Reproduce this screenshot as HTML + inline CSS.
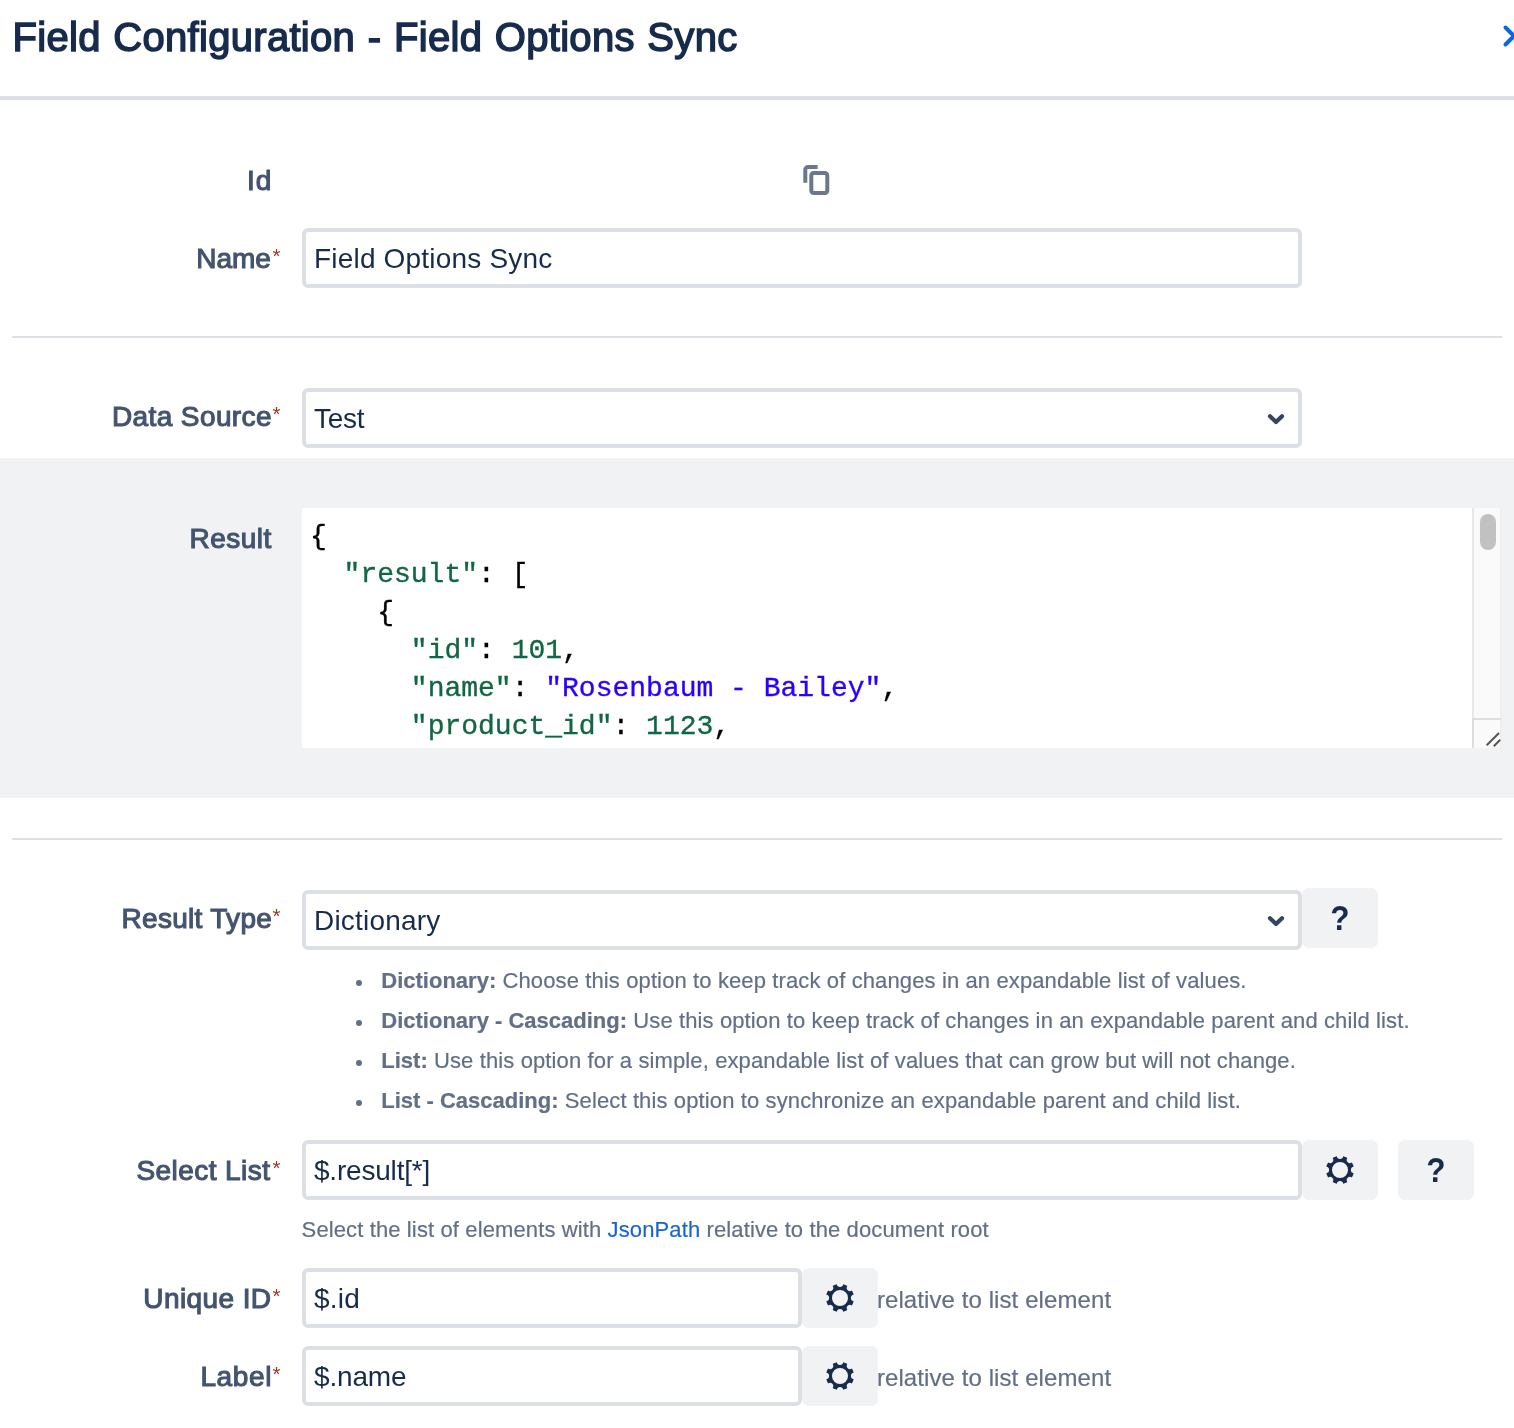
<!DOCTYPE html>
<html lang="en"><head><meta charset="utf-8"><title>Field Configuration - Field Options Sync</title>
<style>
*{box-sizing:border-box;margin:0;padding:0}
html,body{width:1514px;height:1428px;overflow:hidden;background:#fff}
body{position:relative;font-family:"Liberation Sans",sans-serif;color:#172B4D}
#root{position:absolute;left:0;top:0;width:1514px;height:1428px;will-change:transform}
.a{position:absolute}
.t{position:absolute;white-space:pre;line-height:1}
h1.t{font-size:40px;font-weight:400;color:#172B4D;letter-spacing:.3px;word-spacing:1.2px;-webkit-text-stroke:1.5px #172B4D}
.lb{font-size:28px;font-weight:400;color:#44546F;-webkit-text-stroke:1.1px #44546F}
.rq{font-size:20.5px;color:#AE2E24;left:272.4px;font-weight:400}
.in{position:absolute;height:60px;border:4px solid #DCDFE4;border-radius:6px;background:#fff}
.v{font-size:28px;color:#172B4D;left:314px}
.btn{position:absolute;width:76px;height:60px;border-radius:7px;background:#F1F2F4}
.q{font-size:35px;font-weight:700;color:#172B4D;width:76px;text-align:center;transform:scaleX(.9)}
.hr{position:absolute;left:12px;width:1490px;height:2px;background:#DCDFE4}
.d{font-size:22px;color:#626F86;letter-spacing:.12px;-webkit-text-stroke:.2px #626F86}
.d b{letter-spacing:0}
.d24{font-size:24px;color:#626F86;letter-spacing:.09px;-webkit-text-stroke:.2px #626F86}
.ic{position:absolute;overflow:visible}
.code{position:absolute;left:302px;top:508px;width:1200px;height:240px;background:#fff;overflow:hidden}
.code pre{position:absolute;left:8px;top:10px;font-family:"Liberation Mono","DejaVu Sans Mono",monospace;font-size:28px;line-height:38px;color:#000;-webkit-text-stroke:.35px}
.k{color:#116644}.s{color:#2A00FF}
.dot{position:absolute;left:356px;width:6px;height:6px;border-radius:50%;background:#626F86}
a{color:#0C66E4;text-decoration:none}
</style></head>
<body>
<div id="root">
<h1 class="t" style="left:12.5px;top:17px">Field Configuration - Field Options Sync</h1>
<svg class="ic" style="left:1496px;top:20px" width="18" height="32" viewBox="1496 20 18 32"><path d="M1505.5 27.5L1514 36L1505.5 44.5" fill="none" stroke="#0C66E4" stroke-width="4" stroke-linecap="round" stroke-linejoin="round"/></svg>
<div class="a" style="left:0;top:96px;width:1514px;height:4px;background:#DCDFE4"></div>
<label class="t lb" style="left:247px;top:167px;letter-spacing:1px">Id</label>
<svg class="ic" style="left:800px;top:162px" width="34" height="36" viewBox="800 162 34 36"><g fill="none" stroke="#6B778C" stroke-width="4"><rect x="811.3" y="173" width="16" height="20" rx="2.4"/><path d="M805.3 182.8V169.6a2.5 2.5 0 0 1 2.5-2.5H817.6"/></g></svg>
<label class="t lb" style="left:196.2px;top:245px;letter-spacing:.02px">Name</label><span class="t rq" style="top:246px">*</span>
<div class="in" style="left:302px;top:228px;width:1000px"></div><span class="t v" style="left:314px;top:245px;letter-spacing:.19px">Field Options Sync</span>
<div class="hr" style="top:336px"></div>
<label class="t lb" style="left:112px;top:403px;letter-spacing:.39px">Data Source</label><span class="t rq" style="top:404px">*</span>
<div class="in" style="left:302px;top:388px;width:1000px"></div><span class="t v" style="left:314px;top:405px;letter-spacing:-.27px">Test</span>
<svg class="ic" style="left:1264px;top:410px" width="24" height="20" viewBox="1264 410 24 20"><path d="M1270 416.2L1276 422L1282 416.2" fill="none" stroke="#344563" stroke-width="4.2" stroke-linecap="round" stroke-linejoin="round"/></svg>
<div class="a" style="left:0;top:458px;width:1514px;height:340px;background:#F1F2F4"></div>
<label class="t lb" style="left:189.6px;top:525px;letter-spacing:.46px">Result</label>
<div class="code"><pre>{
  <span class="k">"result"</span>: [
    {
      <span class="k">"id"</span>: <span class="k">101</span>,
      <span class="k">"name"</span>: <span class="s">"Rosenbaum - Bailey"</span>,
      <span class="k">"product_id"</span>: <span class="k">1123</span>,</pre><div class="a" style="left:1170px;top:0;width:30px;height:240px;background:#FAFAFA;border-left:2px solid #E8E8E8;border-right:2px solid #EFEFEF"></div><div class="a" style="left:1178px;top:6px;width:16px;height:36px;border-radius:8px;background:#C1C1C1"></div><div class="a" style="left:1170px;top:210px;width:30px;height:30px;background:#FAFAFA;border-left:2px solid #DDD;border-top:2px solid #DDD;border-right:2px solid #EEE"></div><svg class="ic" style="left:1170px;top:210px" width="30" height="30" viewBox="0 0 30 30"><path d="M14.7 27.3L27 15M21.8 28.2L28.2 21.8" stroke="#555" stroke-width="2" fill="none"/></svg></div>
<div class="hr" style="top:838px"></div>
<label class="t lb" style="left:121.5px;top:905px;letter-spacing:.3px">Result Type</label><span class="t rq" style="top:906px">*</span>
<div class="in" style="left:302px;top:890px;width:1000px"></div><span class="t v" style="left:314px;top:907px;letter-spacing:.19px">Dictionary</span>
<svg class="ic" style="left:1264px;top:912px" width="24" height="20" viewBox="1264 912 24 20"><path d="M1270 918.2L1276 924L1282 918.2" fill="none" stroke="#344563" stroke-width="4.2" stroke-linecap="round" stroke-linejoin="round"/></svg>
<div class="btn" style="left:1302px;top:888px"></div><span class="t q" style="left:1302px;top:900px">?</span>
<div class="dot" style="top:980px"></div><span class="t d" style="left:381.3px;top:970px"><b>Dictionary:</b> Choose this option to keep track of changes in an expandable list of values.</span>
<div class="dot" style="top:1020px"></div><span class="t d" style="left:381.3px;top:1010px"><b>Dictionary - Cascading:</b> Use this option to keep track of changes in an expandable parent and child list.</span>
<div class="dot" style="top:1060px"></div><span class="t d" style="left:381.3px;top:1050px"><b>List:</b> Use this option for a simple, expandable list of values that can grow but will not change.</span>
<div class="dot" style="top:1100px"></div><span class="t d" style="left:381.3px;top:1090px"><b>List - Cascading:</b> Select this option to synchronize an expandable parent and child list.</span>
<label class="t lb" style="left:136.4px;top:1157px;letter-spacing:.44px">Select List</label><span class="t rq" style="top:1158px">*</span>
<div class="in" style="left:302px;top:1140px;width:1000px"></div><span class="t v" style="left:314px;top:1157px;letter-spacing:-.2px">$.result[*]</span>
<div class="btn" style="left:1302px;top:1140px"></div><svg class="ic" style="left:1324px;top:1154px" width="32" height="32" viewBox="-16 -16 32 32"><path fill="#172B4D" fill-rule="evenodd" d="M13.64 -3.17A3.2 3.2 0 0 0 13.64 3.17A14.0 14.0 0 0 1 11.88 7.40A3.2 3.2 0 0 0 7.40 11.88A14.0 14.0 0 0 1 3.17 13.64A3.2 3.2 0 0 0 -3.17 13.64A14.0 14.0 0 0 1 -7.40 11.88A3.2 3.2 0 0 0 -11.88 7.40A14.0 14.0 0 0 1 -13.64 3.17A3.2 3.2 0 0 0 -13.64 -3.17A14.0 14.0 0 0 1 -11.88 -7.40A3.2 3.2 0 0 0 -7.40 -11.88A14.0 14.0 0 0 1 -3.17 -13.64A3.2 3.2 0 0 0 3.17 -13.64A14.0 14.0 0 0 1 7.40 -11.88A3.2 3.2 0 0 0 11.88 -7.40A14.0 14.0 0 0 1 13.64 -3.17ZM8.0 0A8.0 8.0 0 1 0 -8.0 0A8.0 8.0 0 1 0 8.0 0Z"/></svg>
<div class="btn" style="left:1398px;top:1140px"></div><span class="t q" style="left:1398px;top:1152px">?</span>
<span class="t d" style="left:301.6px;top:1219px">Select the list of elements with <a>JsonPath</a> relative to the document root</span>
<label class="t lb" style="left:143.3px;top:1285px;letter-spacing:.41px">Unique ID</label><span class="t rq" style="top:1286px">*</span>
<div class="in" style="left:302px;top:1268px;width:500px"></div><span class="t v" style="left:314px;top:1285px;letter-spacing:.2px">$.id</span>
<div class="btn" style="left:802px;top:1268px"></div><svg class="ic" style="left:824px;top:1282px" width="32" height="32" viewBox="-16 -16 32 32"><path fill="#172B4D" fill-rule="evenodd" d="M13.64 -3.17A3.2 3.2 0 0 0 13.64 3.17A14.0 14.0 0 0 1 11.88 7.40A3.2 3.2 0 0 0 7.40 11.88A14.0 14.0 0 0 1 3.17 13.64A3.2 3.2 0 0 0 -3.17 13.64A14.0 14.0 0 0 1 -7.40 11.88A3.2 3.2 0 0 0 -11.88 7.40A14.0 14.0 0 0 1 -13.64 3.17A3.2 3.2 0 0 0 -13.64 -3.17A14.0 14.0 0 0 1 -11.88 -7.40A3.2 3.2 0 0 0 -7.40 -11.88A14.0 14.0 0 0 1 -3.17 -13.64A3.2 3.2 0 0 0 3.17 -13.64A14.0 14.0 0 0 1 7.40 -11.88A3.2 3.2 0 0 0 11.88 -7.40A14.0 14.0 0 0 1 13.64 -3.17ZM8.0 0A8.0 8.0 0 1 0 -8.0 0A8.0 8.0 0 1 0 8.0 0Z"/></svg>
<span class="t d24" style="left:876.9px;top:1288px">relative to list element</span>
<label class="t lb" style="left:200.4px;top:1363px;letter-spacing:.64px">Label</label><span class="t rq" style="top:1364px">*</span>
<div class="in" style="left:302px;top:1346px;width:500px"></div><span class="t v" style="left:314px;top:1363px;letter-spacing:-.16px">$.name</span>
<div class="btn" style="left:802px;top:1346px"></div><svg class="ic" style="left:824px;top:1360px" width="32" height="32" viewBox="-16 -16 32 32"><path fill="#172B4D" fill-rule="evenodd" d="M13.64 -3.17A3.2 3.2 0 0 0 13.64 3.17A14.0 14.0 0 0 1 11.88 7.40A3.2 3.2 0 0 0 7.40 11.88A14.0 14.0 0 0 1 3.17 13.64A3.2 3.2 0 0 0 -3.17 13.64A14.0 14.0 0 0 1 -7.40 11.88A3.2 3.2 0 0 0 -11.88 7.40A14.0 14.0 0 0 1 -13.64 3.17A3.2 3.2 0 0 0 -13.64 -3.17A14.0 14.0 0 0 1 -11.88 -7.40A3.2 3.2 0 0 0 -7.40 -11.88A14.0 14.0 0 0 1 -3.17 -13.64A3.2 3.2 0 0 0 3.17 -13.64A14.0 14.0 0 0 1 7.40 -11.88A3.2 3.2 0 0 0 11.88 -7.40A14.0 14.0 0 0 1 13.64 -3.17ZM8.0 0A8.0 8.0 0 1 0 -8.0 0A8.0 8.0 0 1 0 8.0 0Z"/></svg>
<span class="t d24" style="left:876.9px;top:1366px">relative to list element</span>
</div>
</body></html>
